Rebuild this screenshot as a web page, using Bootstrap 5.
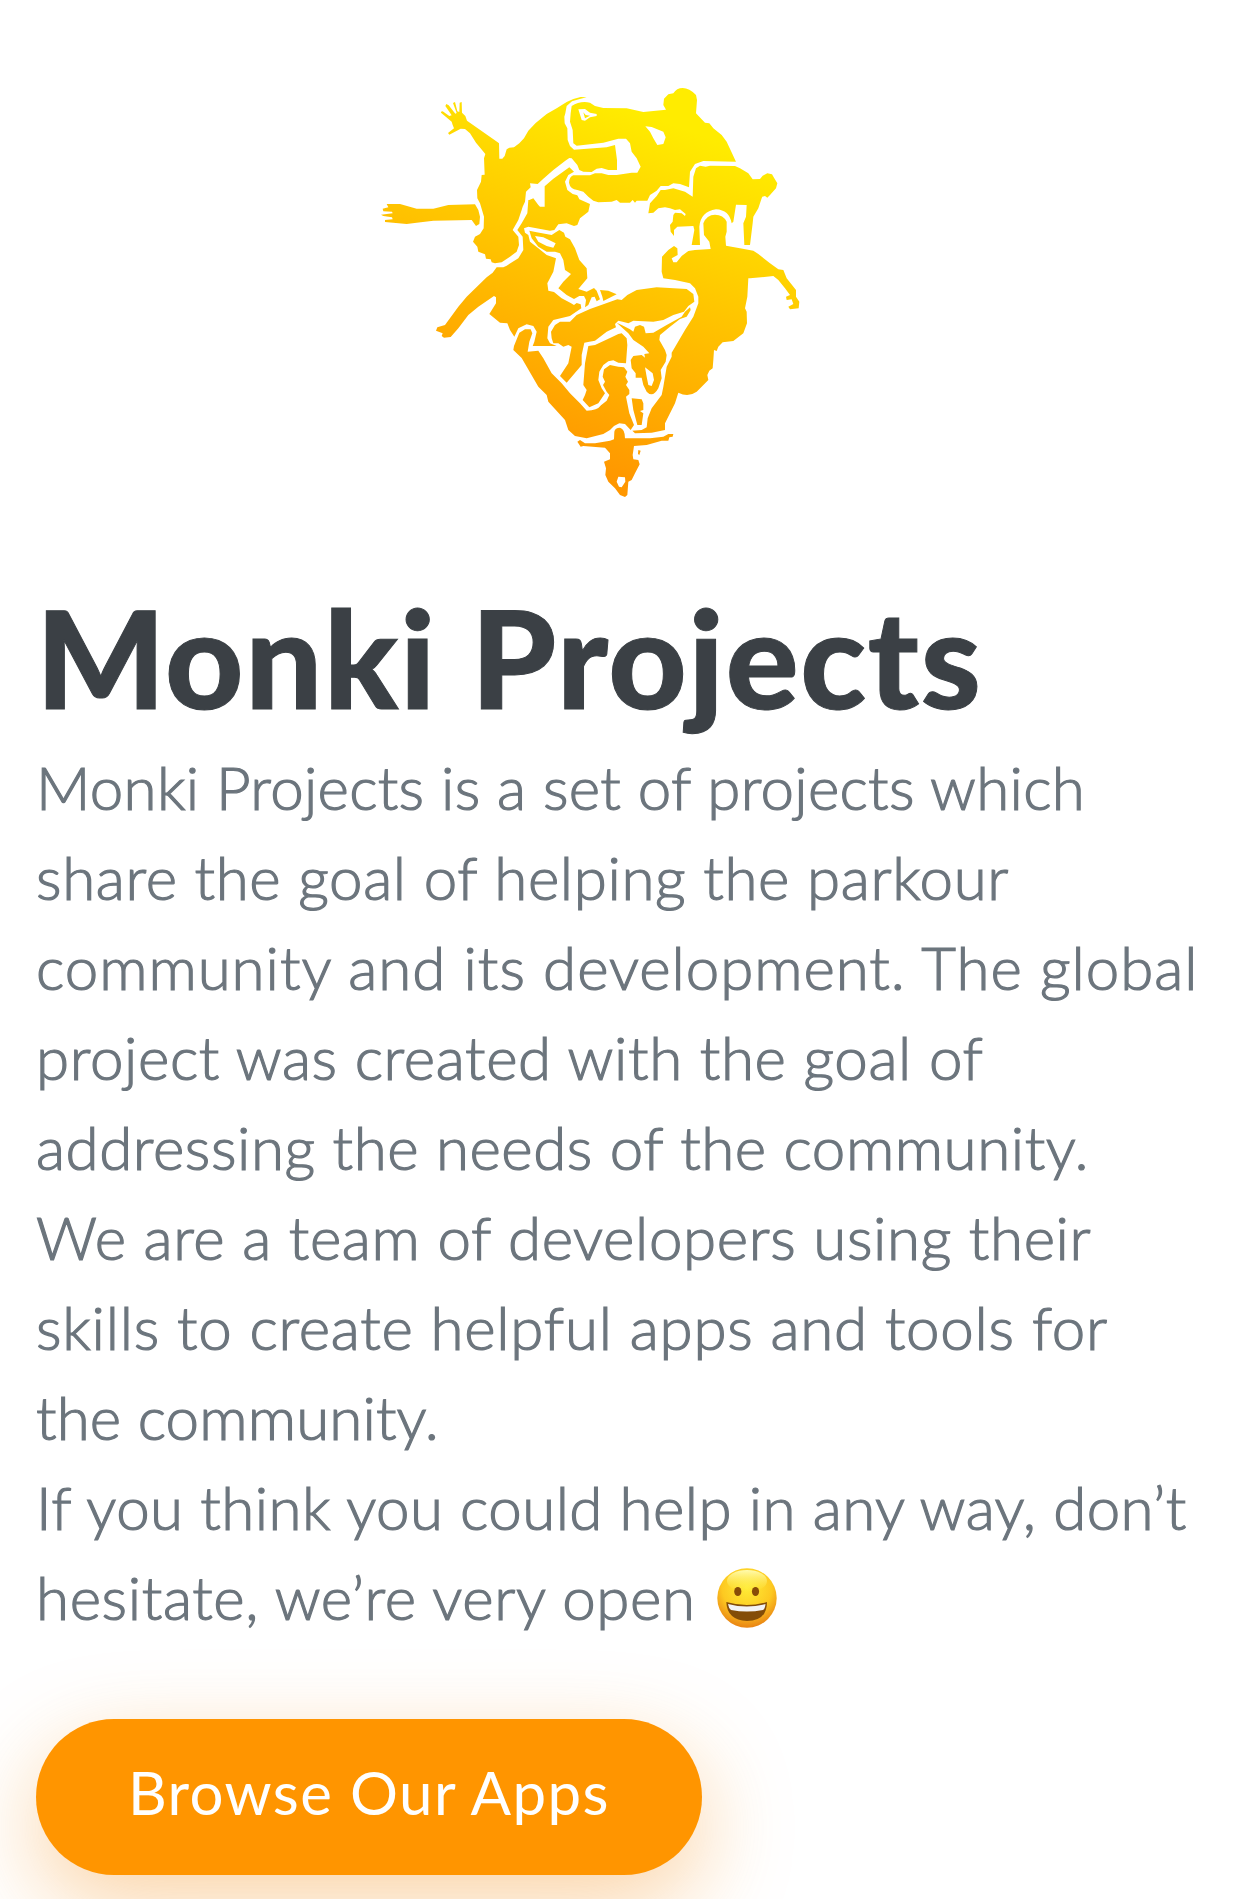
<!DOCTYPE html>
<html lang="en">
<head>
<meta charset="utf-8">
<meta name="viewport" content="width=device-width, initial-scale=1">
<title>Monki Projects</title>
<link href="https://cdn.jsdelivr.net/npm/bootstrap@5.3.0/dist/css/bootstrap.min.css" rel="stylesheet">
<style>
body{font-family:Lato,"Open Sans",sans-serif;background:#fff}
.hero{height:1899px;padding:80px 36px 0;overflow:hidden}
.logo{width:480px;height:430px}
.title{font-size:136px;font-weight:900;line-height:160px;color:#3b4045;margin:67px 0 5px 0;letter-spacing:1.7px;white-space:nowrap;-webkit-text-stroke:1px #3b4045}
.intro{font-size:60px;font-weight:300;line-height:90px;color:#6c757d;margin:0;white-space:nowrap;-webkit-text-stroke:1.2px #6c757d;letter-spacing:.64px}
.intro span:nth-child(1){letter-spacing:.3px}
.intro span:nth-child(3){letter-spacing:.97px}
.intro span:nth-child(5){letter-spacing:.57px}
.intro span:nth-child(7){letter-spacing:.75px}
.intro span:nth-child(8){letter-spacing:.15px}
.intro span:nth-child(9){letter-spacing:.45px}
.intro .emoji{width:60px;height:60px;margin:-10px 0 -10px 21px;vertical-align:2px}
.cta{--bs-btn-color:#fff;--bs-btn-bg:#ff9500;--bs-btn-border-width:0;width:666px;height:156px;padding:0 0 10px;font-size:60px;line-height:90px;letter-spacing:1.4px;margin-top:77px;box-shadow:0 30px 90px rgba(245,135,10,.36)}
</style>
</head>
<body>
<main class="hero d-flex flex-column align-items-start">
<svg class="logo align-self-center flex-shrink-0" viewBox="33 0 1440 1290" role="img" aria-label="Monki Projects logo">
<defs>
<linearGradient id="sun" gradientUnits="userSpaceOnUse" x1="900" y1="130" x2="540" y2="1130"><stop offset="0" stop-color="#ffec00"/><stop offset="1" stop-color="#ff9700"/></linearGradient>
<mask id="figures" maskUnits="userSpaceOnUse" x="0" y="0" width="1500" height="1300">
<g fill="#fff" stroke-linejoin="round">
<!-- reaching figure, upper left -->
<path d="M213 95L218 94 238 108 245 106 226 78 229 72 236 76 256 101 260 99 249 69 255 66 262 94 268 96 269 68 275 66 276 98 286 108 291 122 382 186 387 190 388 236 397 236 404 228 410 208 418 203 432 202 448 190 462 175 475 152 497 129 530 102 560 85 590 66 610 57 632 51 650 52 632 56 606 64 590 78 586 100 583 110 584 130 592 145 593 180 600 198 612 209 710 202 735 195 741 240 741 270 715 270 695 264 680 266 665 276 640 275 628 270 622 255 605 235 598 234 585 243 550 270 520 296 503 312 480 310 482 322 468 335 465 365 458 380 455 390 445 420 428 450 445 470 447 495 440 515 420 530 395 547 375 550 365 547 362 538 348 536 345 523 325 515 322 500 309 485 315 470 330 462 341 445 342 410 330 370 322 355 321 330 333 305 335 285 344 284 342 235 346 222 318 188 300 160 285 147 272 146 238 164 234 159 252 145 248 135 245 125 213 98Z"/>
<path d="M50 372L90 372 140 386 190 386 235 375 315 373 325 390 330 410 328 432 318 438 305 420 190 422 140 428 110 432 45 426 45 420 68 418 66 412 40 408 33 404 68 400 66 395 40 394 38 386 55 382Z"/>
<g transform="translate(0 360)">
<path d="M475 0L472 40 455 70 442 90 458 110 460 150 445 175 410 197 400 202 380 202 368 218 350 232 290 290 265 320 225 375 202 382 198 392 218 400 215 408 222 413 242 411 265 385 295 345 325 320 372 288 378 292 378 310 358 342 390 368 412 370 420 390 433 410 445 385 470 373 490 378 500 395 493 425 488 438 560 438 540 430 532 415 535 380 550 360 600 348 634 325 632 313 620 309 612 315 602 309 575 295 552 276 535 272 532 250 550 215 558 175 530 165 505 145 480 125 475 105 465 98 462 85 475 80 540 92 553 90 565 73 590 70 612 78 622 75 630 55 655 35 660 12 628 -2 622 -14 608 -18 592 -30 585 -55 595 -75 612 -85 598 -98 550 -64 524 -41 524 20 510 20 505 15 490 -5 478 0Z"/>
<path d="M478 92L500 97 545 105 555 98 568 90 582 98 586 110 600 118 615 145 628 180 650 205 652 235 625 267 650 275 672 264 680 272 690 298 680 304 674 290 665 292 655 315 645 322 648 300 642 288 628 288 612 297 590 285 565 265 580 245 603 222 585 210 580 180 570 160 555 155 530 155 505 140 485 115ZM690 270L715 272 740 283 700 303 697 290Z"/>
</g>
<!-- upper arch -->
<g transform="translate(510 0)">
<path d="M95 78Q120 62 150 68L165 78 190 84 260 85 310 96 378 89 370 75 372 56 385 43 400 40Q410 24 428 24 448 24 468 45L471 60 468 100 485 118 495 128 508 130 520 145 545 165 560 185 588 245 490 243 465 252 450 275 447 322 420 312 400 310 385 318 362 318 350 332 330 345 322 362 290 362 285 368 278 360 270 368 240 368 230 360 215 365 175 367 160 362 145 350 130 335 112 330Q90 327 87 308 88 290 100 286L150 286 165 280 185 280 205 285 230 285 275 278 292 278 302 260 290 235 275 215 270 190 258 176 235 176 190 188 150 193 110 197 100 190 98 150 90 125 92 100Z"/>
</g>
<g transform="translate(510 360)">
<!-- crouching figure, right -->
<path d="M458 -10L435 -25 400 -35 375 -30 362 -30 350 -12 330 10 325 40 340 38 355 25 375 22 390 25 405 30 420 28 437 42 435 48 425 40 405 38 400 45 398 65 390 75 392 95 402 108 402 90 412 80 460 78 463 90 455 135 480 135 478 80Q482 35 528 28 568 30 575 70L580 65 588 14 620 15 618 50 610 70 613 135 630 135 638 70 640 50 655 25 665 -5 667 -10 675 -12 682 -7 690 -15 708 -35 712 -50 702 -67 696 -77 682 -80 668 -73 660 -63 638 -62 625 -80 600 -95 585 -102 510 -103 497 -100 480 -103 468 -95 460 -70Z"/>
<!-- standing figure -->
<path d="M512 147L508 125 492 105 490 70Q500 44 525 44 550 44 560 65L560 95 556 110 558 137 600 145 640 152 655 162 690 190 715 208 730 210 740 235 768 270 768 290 778 305 776 325 750 328 745 320 760 312 755 298 740 300 738 290 750 285 735 265 715 240 700 228 630 235 625 235 622 290 615 325 620 335 621 370 610 400 580 423 548 427 535 440 530 453 522 450 520 480 518 505 508 512 502 525 505 540 485 560 470 575 Q445 593 415 578L405 610 390 640 375 670 375 690 335 698 285 700 277 692 305 690 320 682 323 655 335 625 365 585 370 560 375 530 380 500 395 470 395 458 435 390 460 350 475 310 475 290 465 265 450 250 405 240 370 235 365 215 366 170 385 150 402 138 412 145 413 165 395 175 400 187 410 187 425 168 445 153 465 150Z"/>
<!-- arched back -->
<path d="M150 327L190 313 232 298 245 300 262 285 290 270 350 262 440 267 460 282 463 305 445 318 432 335 400 345 370 360 340 365 280 362 265 370 248 365 235 362 225 372 228 382 200 395 165 422 148 425 133 428 125 465 125 495 80 548 60 528 85 490 95 440 85 435 70 440 55 430 40 430 35 415 33 395 45 375 60 365 90 365 110 345Z"/>
</g>
<g transform="translate(390 750)">
<path d="M265 48L285 45 330 24 355 12 365 10 380 25 382 45 378 100 355 98 340 91 325 94 310 105 298 125 295 150 305 175 315 190 295 220 268 232 248 210 255 195 260 180 250 165 255 100Z"/>
<path d="M350 -22L365 -15 390 -2 400 5 405 -10 420 -15 432 -10 437 10 460 8 500 -15 545 -40 555 -55 570 -68 572 -60 560 -40 540 -33 510 -10 480 15 478 30 495 60 500 75 497 95 482 120 485 145 475 175Q458 205 440 185L430 165 425 143 407 143 407 130 395 115 392 90 400 78 425 75 435 83 433 72 448 70 430 50 400 30 385 10Z"/>
<!-- lower leg and seated head -->
<path d="M42 48L58 8 75 -2 92 -2 97 10 88 35 83 65 115 62 130 85 155 130 185 160 210 190 240 220 260 242Q292 242 303 226L320 212 328 195 320 185 309 165 315 155 308 140 312 118 330 105 355 110 372 112 382 125 376 140 384 155 378 165 388 180 388 192 378 200 388 250 402 285 392 300 375 282 358 280 342 288 330 300 310 312 260 325 225 318 205 300 195 270 145 215 140 195 115 170 65 84 40 60Z"/>
<path d="M395 205L425 208 430 220 430 240 420 243 430 250 425 285 412 285 400 240Z"/>
<path d="M232 335L240 330 255 340 285 340 330 332 342 328 343 305Q345 293 360 293 375 297 375 325L400 325 450 325 490 320 505 312 520 312 518 320 508 322 505 332 485 332 440 345 402 348 398 375 400 388 415 390 419 403 405 430 395 450 385 455 382 495 375 501 360 495 345 475 325 455 316 435 318 415 312 395 330 388 330 370 315 353 250 348 242 350ZM415 360L422 362 418 375 414 372Z"/>
</g>
</g>
<g fill="#000">
<path d="M622 345L645 342 658 360 642 356ZM625 88L645 87 660 98 680 102 680 108 660 112 645 122 635 120ZM826 139L845 141 880 155 887 172 880 192 862 195 850 175 840 155ZM495 468L520 472 557 490 550 503 530 498 505 485ZM825 862L848 880 852 900 845 918 835 915 830 890ZM745 1190L765 1192 766 1205 755 1222 747 1220 740 1205Z"/>
</g>
<path d="M640 97L647 105 660 107 645 115Z" fill="#fff"/>
</mask>
</defs>
<path fill="url(#sun)" mask="url(#figures)" d="M0 0H1500V1290H0Z"/>
</svg>
<h1 class="title">Monki Projects</h1>
<p class="intro">
<span class="d-block">Monki Projects is a set of projects which</span>
<span class="d-block">share the goal of helping the parkour</span>
<span class="d-block">community and its development. The global</span>
<span class="d-block">project was created with the goal of</span>
<span class="d-block">addressing the needs of the community.</span>
<span class="d-block">We are a team of developers using their</span>
<span class="d-block">skills to create helpful apps and tools for</span>
<span class="d-block">the community.</span>
<span class="d-block">If you think you could help in any way, don’t</span>
<span class="d-block">hesitate, we’re very open<svg class="emoji" viewBox="0 0 60 60" role="img" aria-label="grinning face"><defs><radialGradient id="face" cx=".5" cy=".32" r=".68"><stop offset="0" stop-color="#ffec37"/><stop offset=".62" stop-color="#fdc921"/><stop offset="1" stop-color="#e98313"/></radialGradient><linearGradient id="shine" x2="0" y2="1"><stop stop-color="#fffbb0"/><stop offset="1" stop-color="#fff04a" stop-opacity="0"/></linearGradient></defs><circle cx="30" cy="30" r="29.7" fill="url(#face)"/><ellipse cx="30" cy="13" rx="20" ry="11" fill="url(#shine)"/><ellipse cx="20.8" cy="23.5" rx="3.6" ry="4.6" fill="#884c08"/><ellipse cx="38.5" cy="23.5" rx="3.6" ry="4.6" fill="#884c08"/><path d="M9.3 34Q30 40 50 34 50 53 30 53 10 52 9.3 34Z" fill="#834c08"/><path d="M11 36Q30 41 48.500 36Q48 41 46 42 30 45 14 42 11.500 40 11 36Z" fill="#f3f3f5"/></svg></span>
</p>
<a class="cta btn rounded-pill d-flex align-items-center justify-content-center flex-shrink-0" href="#">Browse Our Apps</a>
</main>
<script src="https://cdn.jsdelivr.net/npm/bootstrap@5.3.0/dist/js/bootstrap.bundle.min.js"></script>
</body>
</html>
